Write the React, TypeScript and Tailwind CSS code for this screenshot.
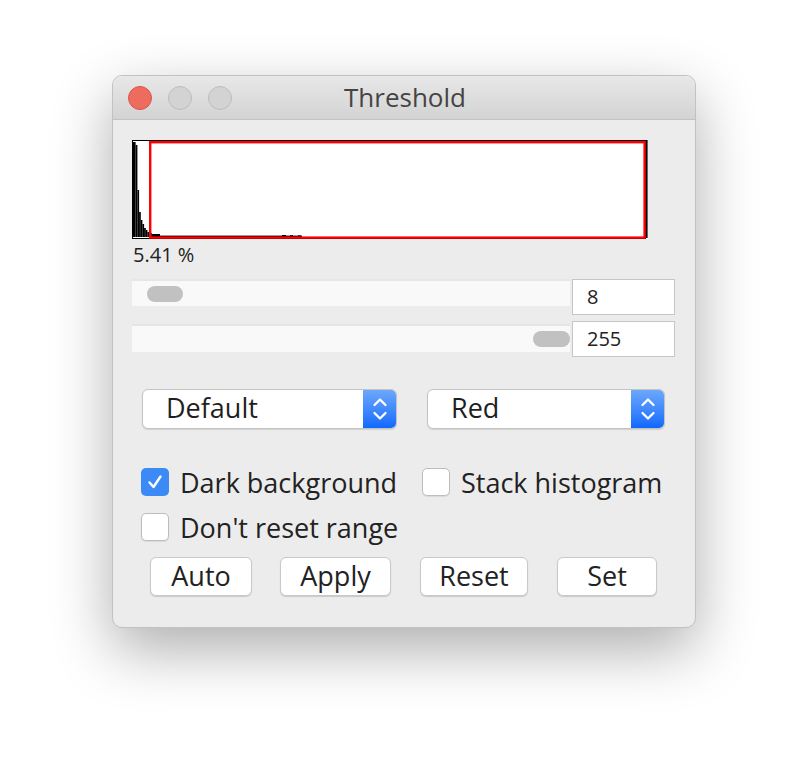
import React from "react"

const font = { fontFamily: '"Open Sans", "DejaVu Sans", sans-serif' }

// [x, width, top] in histogram coordinates, bottom is 97
const bars: number[][] = [
  [1, 2.6, 2],
  [3.6, 1.8, 5],
  [5.4, 1.7, 50],
  [7.1, 1.7, 72],
  [8.8, 1.6, 80],
  [10.4, 1.7, 84],
  [12.1, 1.7, 88],
  [13.8, 1.6, 90],
  [15.4, 1.7, 92],
  [17.1, 2.7, 93],
  [19.8, 8.2, 94],
  [28, 142, 95.6],
  [150, 4, 95],
  [158, 3, 95.2],
  [166, 3, 95.4],
]

function Histogram() {
  return (
    <svg width="516" height="99" viewBox="0 0 516 99" className="block">
      <rect x="0" y="0" width="516" height="99" fill="#ffffff" />
      <rect x="0.5" y="0.5" width="513" height="98" fill="none" stroke="#000" strokeWidth="1" />
      {bars.map(([x, w, t], i) => (
        <rect key={i} x={x} y={t} width={w} height={97 - t} fill="#000" />
      ))}
      <rect x="513" y="0" width="2.6" height="98" fill="#000" />
      <rect x="18.2" y="2.2" width="494.4" height="95.4" fill="none" stroke="#ff0000" strokeWidth="2.4" />
    </svg>
  )
}

function Chevrons() {
  return (
    <svg width="16" height="28" viewBox="0 0 16 28">
      <polyline points="2.5,10 8,4.5 13.5,10" fill="none" stroke="#fff" strokeWidth="2.3" strokeLinecap="round" strokeLinejoin="round" />
      <polyline points="2.5,18 8,23.5 13.5,18" fill="none" stroke="#fff" strokeWidth="2.3" strokeLinecap="round" strokeLinejoin="round" />
    </svg>
  )
}

function Select({ label, width }: { label: string; width: string }) {
  return (
    <div className={`flex h-[40px] ${width} rounded-[6px] border border-[#c4c4c4] bg-white shadow-[0_1px_1px_rgba(0,0,0,0.12)] overflow-hidden`}>
      <div className="flex-1 pl-[23px] pb-[3px] flex items-center text-[27px] text-[#1f1f1f] leading-none">{label}</div>
      <div className="w-[33px] flex items-center justify-center bg-linear-to-b from-[#6ca7fb] to-[#0d68fe]">
        <Chevrons />
      </div>
    </div>
  )
}

function Check({ checked, label }: { checked?: boolean; label: string }) {
  return (
    <div className="flex items-center h-[28px]">
      {checked ? (
        <div className="w-[28px] h-[28px] rounded-[5px] bg-[#3c8af6] flex items-center justify-center">
          <svg width="18" height="18" viewBox="0 0 18 18">
            <polyline points="3.5,9.5 7.5,14 14.5,3.5" fill="none" stroke="#fff" strokeWidth="2.4" strokeLinecap="round" strokeLinejoin="round" />
          </svg>
        </div>
      ) : (
        <div className="w-[28px] h-[28px] rounded-[5px] bg-white border border-[#bdbdbd] shadow-[0_1px_1px_rgba(0,0,0,0.08)]" />
      )}
      <span className="ml-[11px] text-[27px] leading-none text-[#222]">{label}</span>
    </div>
  )
}

function Button({ label, cls }: { label: string; cls: string }) {
  return (
    <button className={`h-[39px] pb-[2px] rounded-[6px] bg-white border border-[#c9c9c9] shadow-[0_1px_1px_rgba(0,0,0,0.15)] text-[27px] leading-none text-[#222] ${cls}`}>
      {label}
    </button>
  )
}

export default function App() {
  return (
    <div className="min-h-screen bg-white pt-[75px] pl-[112px]" style={font}>
      <div className="w-[584px] h-[553px] rounded-[10px] bg-[#ececec] border border-[#c2c2c2] shadow-[0_22px_60px_rgba(0,0,0,0.32)] overflow-hidden flex flex-col">
        {/* title bar */}
        <div className="relative h-[44px] shrink-0 flex items-center bg-linear-to-b from-[#e8e8e8] to-[#d3d3d3] border-b border-[#c2c2c2]">
          <div className="flex items-center gap-[16px] pl-[15px]">
            <div className="w-[24px] h-[24px] rounded-full bg-[#ee6b60] border border-[#d8574c]" />
            <div className="w-[24px] h-[24px] rounded-full bg-[#d3d3d3] border border-[#bdbdbd]" />
            <div className="w-[24px] h-[24px] rounded-full bg-[#d3d3d3] border border-[#bdbdbd]" />
          </div>
          <div className="absolute inset-0 flex items-center justify-center text-[26px] text-[#444] pl-[2px] pb-[1px]">Threshold</div>
        </div>

        <div className="pl-[19px] pt-[20px] flex flex-col">
          <Histogram />
          <div className="mt-[4px] text-[20px] leading-[24px] text-[#222] pl-[1px]">5.41 %</div>

          {/* sliders */}
          <div className="mt-[12px] flex items-start">
            <div className="w-[438px] h-[27px] bg-[#f9f9f9] border-t-2 border-[#e6e6e6] flex items-center pl-[15px]">
              <div className="w-[36px] h-[16px] rounded-full bg-[#c1c1c1]" />
            </div>
            <div className="ml-[2px] w-[103px] h-[36px] bg-white border border-[#c6c6c6] flex items-center pl-[14px] text-[20px] text-[#222]">8</div>
          </div>
          <div className="mt-[6px] flex items-start">
            <div className="mt-[3px] w-[438px] h-[28px] bg-[#f9f9f9] border-t-2 border-[#e6e6e6] flex items-center justify-end">
              <div className="w-[37px] h-[16px] rounded-full bg-[#c1c1c1]" />
            </div>
            <div className="ml-[2px] w-[103px] h-[36px] bg-white border border-[#c6c6c6] flex items-center pl-[14px] text-[20px] text-[#222]">255</div>
          </div>

          {/* selects */}
          <div className="mt-[32px] pl-[10px] flex gap-[30px]">
            <Select label="Default" width="w-[255px]" />
            <Select label="Red" width="w-[238px]" />
          </div>

          {/* checkboxes */}
          <div className="mt-[39px] pl-[9px] flex">
            <div className="w-[281px]">
              <Check checked label="Dark background" />
            </div>
            <Check label="Stack histogram" />
          </div>
          <div className="mt-[17px] pl-[9px] flex">
            <Check label="Don't reset range" />
          </div>

          {/* buttons */}
          <div className="mt-[16px] flex">
            <Button label="Auto" cls="ml-[18px] w-[102px]" />
            <Button label="Apply" cls="ml-[28px] w-[111px]" />
            <Button label="Reset" cls="ml-[29px] w-[108px]" />
            <Button label="Set" cls="ml-[29px] w-[100px]" />
          </div>
        </div>
      </div>
    </div>
  )
}
